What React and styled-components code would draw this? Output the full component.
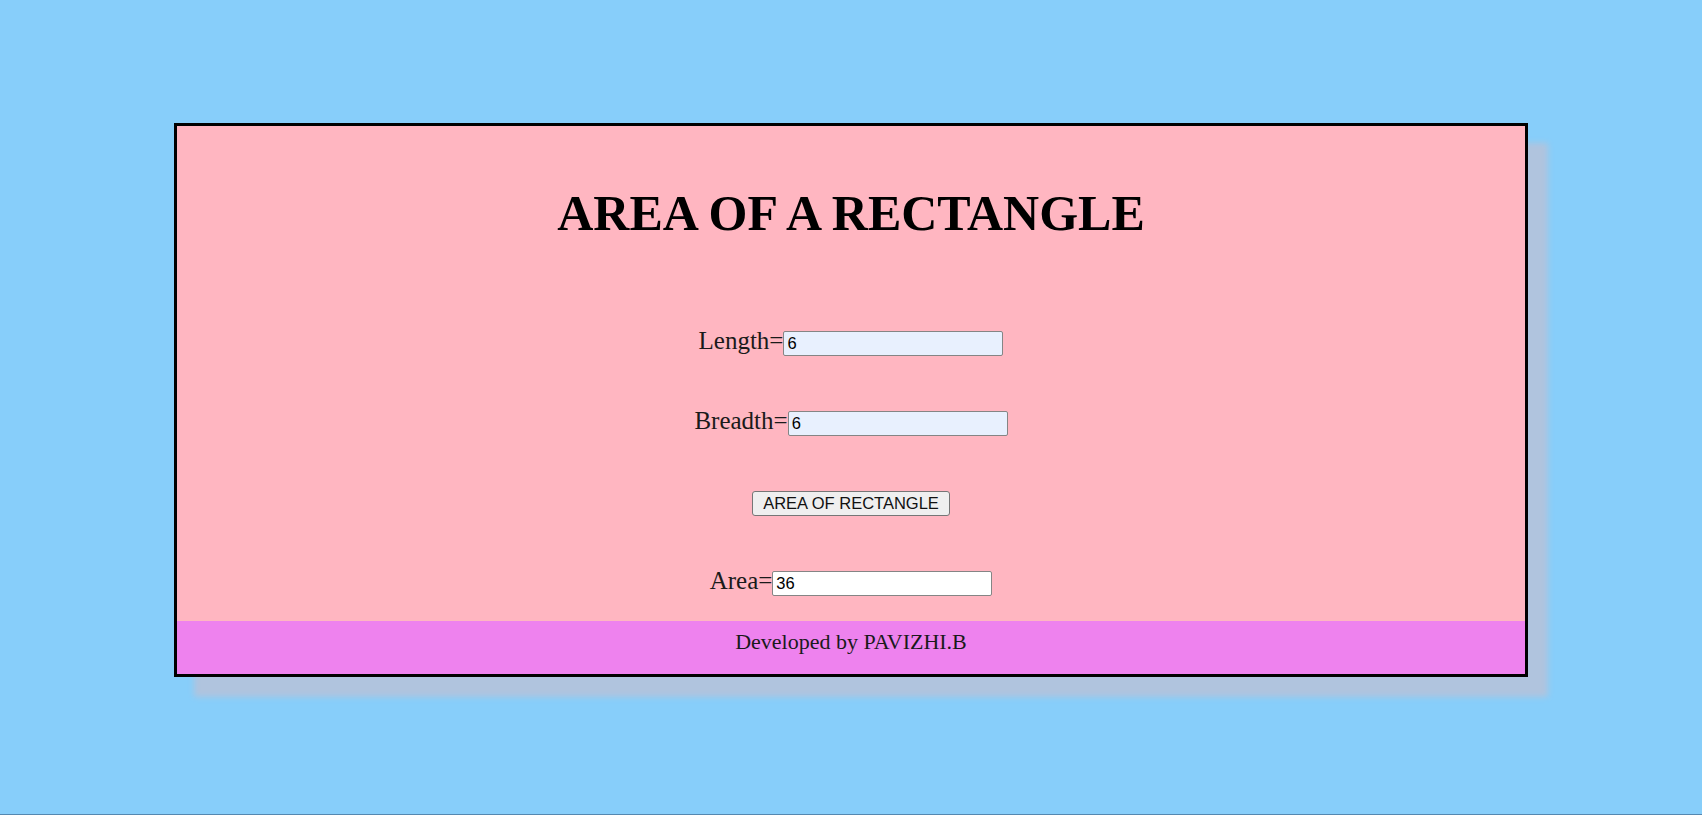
import React, {useState} from 'react';
import styled, {createGlobalStyle} from 'styled-components';

const GlobalStyle = createGlobalStyle`
  html, body {
    margin: 0;
    padding: 0;
    background: #87cefa;
  }
`;

const App = () => {
  const [length, setLength] = useState('6');
  const [breadth, setBreadth] = useState('6');
  const [area, setArea] = useState('36');

  const calcArea = () => {
    setArea(String(Number(length) * Number(breadth)));
  };

  return (
    <Page>
      <GlobalStyle />
      <Card>
        <Title>AREA OF A RECTANGLE</Title>
        <Form onSubmit={e => e.preventDefault()}>
          <Row>
            <Label>Length=</Label>
            <Field $filled value={length} onChange={e => setLength(e.target.value)} />
          </Row>
          <Row>
            <Label>Breadth=</Label>
            <Field $filled value={breadth} onChange={e => setBreadth(e.target.value)} />
          </Row>
          <ButtonRow>
            <Button type="button" onClick={calcArea}>AREA OF RECTANGLE</Button>
          </ButtonRow>
          <Row>
            <Label>Area=</Label>
            <Field value={area} readOnly />
          </Row>
        </Form>
        <Footer>Developed by PAVIZHI.B</Footer>
      </Card>
    </Page>
  );
};

export default App;

const Page = styled.div`
  min-height: 815px;
  box-sizing: border-box;
  padding-top: 123px;
  border-bottom: 1px solid #5588b0;
  font-family: "Liberation Serif", "Times New Roman", serif;
`;

const Card = styled.div`
  width: 1354px;
  margin: 0 auto;
  box-sizing: border-box;
  background: #ffb6c1;
  border: 3px solid #000;
  box-shadow: 20px 20px 6px #b0c4de;
`;

const Title = styled.h1`
  margin: 58px 0 0;
  text-align: center;
  font-size: 50px;
  font-weight: bold;
  color: #000;
`;

const Form = styled.form`
  display: flex;
  flex-direction: column;
  align-items: center;
  gap: 52px;
  padding-top: 85px;
`;

const Row = styled.div`
  display: flex;
  align-items: baseline;
  justify-content: center;
  height: 28px;
`;

const ButtonRow = styled.div`
  display: flex;
  justify-content: center;
  height: 28px;
  box-sizing: border-box;
  padding-top: 4px;
`;

const Label = styled.span`
  font-size: 25px;
  color: #1a1a1a;
`;

const Field = styled.input`
  width: 220px;
  height: 25px;
  box-sizing: border-box;
  padding: 1px 3px;
  border: 1px solid #858585;
  border-radius: 2px;
  background: ${p => (p.$filled ? '#e8f0fe' : '#fff')};
  font-family: "Liberation Sans", Arial, sans-serif;
  font-size: 16.5px;
  color: #000;
  outline: none;
`;

const Button = styled.button`
  height: 25px;
  box-sizing: border-box;
  padding: 1px 10px;
  border: 1px solid #767676;
  border-radius: 3px;
  background: #efefef;
  font-family: "Liberation Sans", Arial, sans-serif;
  font-size: 16.5px;
  color: #111;
  cursor: pointer;
`;

const Footer = styled.div`
  margin-top: 26px;
  height: 53px;
  box-sizing: border-box;
  padding-top: 8px;
  background: #ee82ee;
  text-align: center;
  font-size: 22px;
  color: #1a1a1a;
`;
